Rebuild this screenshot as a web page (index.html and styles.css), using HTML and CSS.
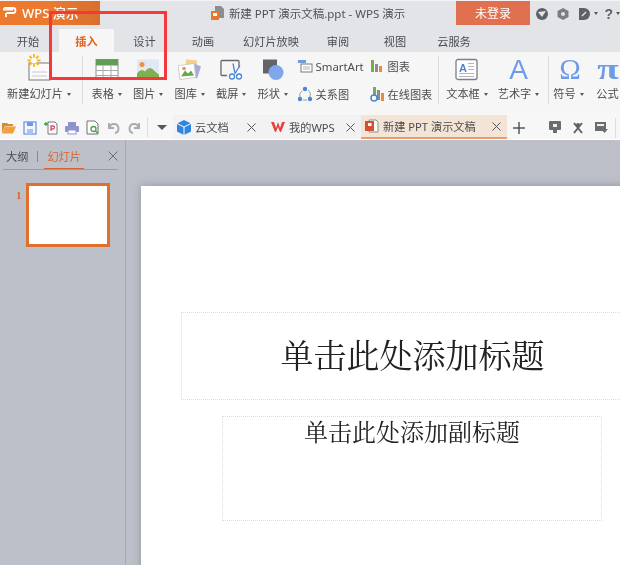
FILE: index.html
```html
<!DOCTYPE html>
<html lang="zh-CN">
<head>
<meta charset="utf-8">
<title>新建 PPT 演示文稿.ppt - WPS 演示</title>
<link rel="stylesheet" href="styles.css">
</head>
<body>
<div class="app">
  <header class="titlebar">
    <div class="appbtn">
      <svg class="applogo" viewBox="0 0 14 10" width="14" height="10"><path d="M1 1h9a2.500 2.500 0 0 1 0 5H3.500M1 1v1.500h9M3 6v4" fill="none" stroke="#fff" stroke-width="1.800"/></svg>
      <span class="appname">WPS 演示</span>
      <i class="appcaret"></i>
    </div>
    <div class="doctitle">
      <svg viewBox="0 0 16 16" width="16" height="16"><path d="M5 1h6l3 3v9H5z" fill="#8a8d94"/><rect x="1" y="6" width="8" height="9" fill="#e8752c"/><rect x="3" y="8" width="4" height="3" fill="#fff"/></svg>
      <span>新建 PPT 演示文稿.ppt - WPS 演示</span>
    </div>
    <button class="login">未登录</button>
    <div class="winicons">
      <svg viewBox="0 0 14 14" width="14" height="14"><circle cx="7" cy="7" r="6" fill="#5f6167"/><path d="M3 5l4 5 4-6z" fill="#e3e4e8"/></svg>
      <svg viewBox="0 0 14 14" width="14" height="14"><path d="M7 1l5.500 3v6L7 13l-5.500-3V4z" fill="#7b7d83"/><circle cx="7" cy="7" r="2" fill="#e3e4e8"/></svg>
      <svg viewBox="0 0 14 14" width="14" height="14"><path d="M2 1h5a6 6 0 0 1 0 12H2z" fill="#5f6167"/><path d="M5 9l4-4" stroke="#e3e4e8" stroke-width="1.500"/></svg>
      <i class="caret"></i>
      <span class="help">?</span>
      <i class="caret"></i>
    </div>
  </header>

  <nav class="tabs">
    <span class="tab">开始</span>
    <span class="tab active">插入</span>
    <span class="tab">设计</span>
    <span class="tab">动画</span>
    <span class="tab">幻灯片放映</span>
    <span class="tab">审阅</span>
    <span class="tab">视图</span>
    <span class="tab">云服务</span>
  </nav>

  <section class="ribbon">
    <div class="item w-new">
      <svg class="newicon" viewBox="0 0 36 28" width="36" height="28"><rect x="5" y="9" width="21" height="17" fill="#fafafa" stroke="#77797e"/><path d="M8 18h15M8 22h15" stroke="#c9cacd"/><g stroke="#f5b81e" stroke-width="1.800"><path d="M10 0v13M3.500 6.500h13M5.500 2l9 9M14.500 2l-9 9"/></g><circle cx="10" cy="6.500" r="3" fill="#fff"/></svg>
      <span class="label">新建幻灯片<i class="caret"></i></span>
    </div>
    <i class="sep"></i>
    <div class="item w-tb">
      <svg viewBox="0 0 24 22" width="24" height="22"><rect x="1" y="1" width="22" height="20" fill="#fff" stroke="#8b8d90"/><rect x="1" y="1" width="22" height="6" fill="#5f9e55"/><path d="M1 12h22M1 17h22M8 7v14M16 7v14" stroke="#a7a9ab"/></svg>
      <span class="label">表格<i class="caret"></i></span>
    </div>
    <div class="item w-tb">
      <svg viewBox="0 0 24 22" width="24" height="22"><rect x="1" y="1" width="22" height="20" fill="#dfe8f3"/><circle cx="6" cy="6" r="2.500" fill="#f0913a"/><path d="M1 21v-6q4-6 8-2 4-6 8-2t6 5v5z" fill="#7fb04c"/></svg>
      <span class="label">图片<i class="caret"></i></span>
    </div>
    <div class="item w-tb">
      <svg viewBox="0 0 24 22" width="24" height="22"><path d="M8 1l11 1-1 13-11-1z" fill="#f2cf8a"/><path d="M16 5l7 3-4 12-6-2z" fill="#a9a7dc"/><rect x="1" y="6" width="16" height="14" fill="#fff" stroke="#c9cacd" transform="rotate(-8 9 13)"/><path d="M3 18l4-6 3 3 3-3 3 5z" fill="#6aa84f"/><circle cx="6" cy="10" r="1.800" fill="#f0913a"/></svg>
      <span class="label">图库<i class="caret"></i></span>
    </div>
    <div class="item w-tb">
      <svg viewBox="0 0 24 22" width="24" height="22"><path d="M8 17H3a1 1 0 0 1-1-1V3a1 1 0 0 1 1-1h16a1 1 0 0 1 1 1v6" fill="none" stroke="#66686c" stroke-width="1.300"/><path d="M14 5l2 10M21 7l-5 8" stroke="#4a86d8" stroke-width="1.300"/><circle cx="13" cy="18" r="2.500" fill="#fff" stroke="#4a86d8" stroke-width="1.300"/><circle cx="20" cy="18" r="2.500" fill="#fff" stroke="#4a86d8" stroke-width="1.300"/></svg>
      <span class="label">截屏<i class="caret"></i></span>
    </div>
    <div class="item w-tb">
      <svg viewBox="0 0 24 22" width="24" height="22"><rect x="2" y="1" width="14" height="14" fill="#626468"/><circle cx="15" cy="14" r="7.500" fill="#7fa7ea"/></svg>
      <span class="label">形状<i class="caret"></i></span>
    </div>
    <div class="col w-smart">
      <span class="small"><svg viewBox="0 0 16 14" width="16" height="14"><path d="M1 1h8v3H1z" fill="#6d9be0"/><rect x="4" y="5" width="11" height="8" fill="#fff" stroke="#77797e"/><path d="M6 8h7M6 10h7" stroke="#b5b6b9"/></svg><span class="latin">SmartArt</span></span>
      <span class="small"><svg viewBox="0 0 16 16" width="16" height="16"><path d="M4 13a5.500 5.500 0 0 1 1-8M11 4a5.500 5.500 0 0 1 1 8M6 14h4" fill="none" stroke="#9a9ca0"/><circle cx="8" cy="3" r="2.200" fill="#4a86d8"/><circle cx="3" cy="13" r="2.200" fill="#4a86d8"/><circle cx="13" cy="13" r="2.200" fill="#4a86d8"/></svg>关系图</span>
    </div>
    <div class="col w-chart">
      <span class="small"><svg viewBox="0 0 14 14" width="14" height="14"><rect x="1" y="1" width="3" height="12" fill="#79ab4f"/><rect x="5" y="5" width="3" height="8" fill="#8b8d90"/><rect x="9" y="7" width="3" height="6" fill="#ea8a3e"/></svg>图表</span>
      <span class="small"><svg viewBox="0 0 14 16" width="14" height="16"><rect x="3" y="1" width="3" height="8" fill="#79ab4f"/><rect x="7" y="4" width="3" height="10" fill="#8b8d90"/><rect x="11" y="7" width="3" height="8" fill="#ea8a3e"/><circle cx="4" cy="12" r="3" fill="#fff" stroke="#4a86d8" stroke-width="1.500"/></svg>在线图表</span>
    </div>
    <i class="sep"></i>
    <div class="item w-tx">
      <svg viewBox="0 0 24 22" width="24" height="22"><rect x="1" y="1" width="21" height="20" rx="2" fill="#fff" stroke="#7d7f83" stroke-width="1.300"/><text x="4" y="13" class="glyph-a">A</text><path d="M13 5h6M13 8h6M13 11h6M4 15h15M4 18h15" stroke="#b5b6b9"/></svg>
      <span class="label">文本框<i class="caret"></i></span>
    </div>
    <div class="item w-art">
      <span class="artglyph">A</span>
      <span class="label">艺术字<i class="caret"></i></span>
    </div>
    <i class="sep"></i>
    <div class="item w-sym">
      <span class="mathglyph">Ω</span>
      <span class="label">符号<i class="caret"></i></span>
    </div>
    <div class="item w-fx">
      <span class="mathglyph pi">π</span>
      <span class="label">公式</span>
    </div>
  </section>

  <section class="quick">
    <div class="qicons">
      <svg viewBox="0 0 14 12" width="14" height="12"><path d="M0 1h5l1 1h5v2H3L0 11z" fill="#d98a2f"/><path d="M3 4.500h11L11 11.500H0z" fill="#f0a040"/></svg>
      <svg viewBox="0 0 14 14" width="14" height="14"><rect x="1" y="1" width="12" height="12" fill="#f2f6fc" stroke="#6f9ae0" stroke-width="1.300"/><rect x="4" y="1" width="6" height="4" fill="#6f9ae0"/><rect x="4" y="8" width="6" height="5" fill="#a7c3ee"/></svg>
      <svg viewBox="0 0 14 14" width="14" height="14"><path d="M4 1h7l2 2v10H4z" fill="#fff" stroke="#77797e"/><path d="M0 3h4M2 1v4" stroke="#3fa34d" stroke-width="1.300"/><path d="M7 10V5h2a1.500 1.500 0 0 1 0 3H7" fill="none" stroke="#d2525a" stroke-width="1.300"/></svg>
      <svg viewBox="0 0 14 14" width="14" height="14"><rect x="3" y="1" width="8" height="4" fill="#8f93cc"/><rect x="0" y="5" width="14" height="6" rx="1" fill="#8f93cc"/><rect x="3" y="9" width="8" height="4" fill="#fff" stroke="#8f93cc"/></svg>
      <svg viewBox="0 0 14 15" width="14" height="15"><path d="M1 1h8l3 3v10H1z" fill="#fff" stroke="#6f7175"/><circle cx="7.500" cy="9" r="2.500" fill="none" stroke="#4c9e55" stroke-width="1.300"/><path d="M9.500 11l2.500 2.500" stroke="#4c9e55" stroke-width="1.500"/></svg>
      <svg class="gray" viewBox="0 0 12 12" width="12" height="12"><path d="M1 1v5h5M1.500 6A4.500 4.500 0 1 1 7 11" fill="none" stroke="#a9abae" stroke-width="2"/></svg>
      <svg class="gray" viewBox="0 0 12 12" width="12" height="12"><path d="M11 1v5H6M10.500 6A4.500 4.500 0 1 0 5 11" fill="none" stroke="#a9abae" stroke-width="2"/></svg>
    </div>
    <i class="qsep"></i>
    <i class="qdrop"></i>
    <div class="doctab w-cloud">
      <svg viewBox="0 0 14 15" width="14" height="15"><path d="M7 0l7 3.500v8L7 15 0 11.500v-8z" fill="#2f86e0"/><path d="M0 3.500L7 7l7-3.500M7 7v8" stroke="#fff" fill="none"/></svg>
      <span class="doclabel">云文档</span>
      <svg class="x" viewBox="0 0 9 9" width="9" height="9"><path d="M.5.5l8 8M8.500.5l-8 8" stroke="#55575b"/></svg>
    </div>
    <div class="doctab w-mine">
      <svg viewBox="0 0 14 12" width="14" height="12"><path d="M0 1h3l2 6 2-6 2 6 2-6h3l-4 10H9L7 6l-2 5H4z" fill="#e5403a"/></svg>
      <span class="doclabel">我的WPS</span>
      <svg class="x" viewBox="0 0 9 9" width="9" height="9"><path d="M.5.5l8 8M8.500.5l-8 8" stroke="#55575b"/></svg>
    </div>
    <div class="doctab current w-doc">
      <svg viewBox="0 0 14 14" width="14" height="14"><path d="M4 1h7l2 2v10H4z" fill="#fff" stroke="#8b8d90"/><rect x="0" y="2" width="9" height="10" fill="#d4502e"/><rect x="3" y="4" width="3.500" height="3" fill="#fff"/></svg>
      <span class="doclabel">新建 PPT 演示文稿</span>
      <svg class="x" viewBox="0 0 9 9" width="9" height="9"><path d="M.5.5l8 8M8.500.5l-8 8" stroke="#55575b"/></svg>
    </div>
    <svg class="plus" viewBox="0 0 12 12" width="12" height="12"><path d="M6 0v12M0 6h12" stroke="#55575b" stroke-width="1.500"/></svg>
    <div class="qright">
      <svg viewBox="0 0 12 13" width="12" height="13"><rect x="0" y="0" width="12" height="9" rx="1" fill="#6a6c70"/><rect x="4" y="9" width="4" height="3" fill="#6a6c70"/><rect x="4" y="3" width="4" height="3" fill="#efefef"/></svg>
      <svg viewBox="0 0 12 12" width="12" height="12"><path d="M2 1l8 10M10 1L2 11" stroke="#5f6167" stroke-width="2"/><circle cx="6" cy="3" r="2" fill="#5f6167"/></svg>
      <svg viewBox="0 0 13 12" width="13" height="12"><rect x="0" y="0" width="11" height="9" fill="#6a6c70"/><rect x="2" y="2" width="7" height="2" fill="#efefef"/><path d="M6 7h7l-3.500 4z" fill="#6a6c70"/></svg>
      <i class="qsep tail"></i>
    </div>
  </section>

  <main class="work">
    <aside class="panel">
      <div class="panelhead">
        <span class="ptab">大纲</span>
        <i class="pbar"></i>
        <span class="ptab on">幻灯片</span>
        <svg class="pclose" viewBox="0 0 10 10" width="10" height="10"><path d="M.5.5l9 9M9.500.5l-9 9" stroke="#6a6c73"/></svg>
      </div>
      <div class="thumbrow">
        <span class="num">1</span>
        <div class="thumb"></div>
      </div>
    </aside>
    <div class="stage">
      <div class="slide">
        <div class="ph title">单击此处添加标题</div>
        <div class="ph sub">单击此处添加副标题</div>
      </div>
    </div>
  </main>

  <div class="annot"></div>
</div>
</body>
</html>
```

FILE: styles.css
```css
* { box-sizing: border-box; }
html, body { margin: 0; height: 100%; overflow: hidden; }
body { font-family: "Noto Sans CJK SC", "Liberation Sans", sans-serif; color: #4a4c50; font-size: 11.2px; }
svg { display: block; flex: none; }
i { display: block; font-style: normal; }
.app { position: relative; width: 620px; height: 565px; display: flex; flex-direction: column; overflow: hidden; background: #bdc0c9; filter: blur(.4px); }

.titlebar { height: 26px; flex: none; background: #e3e4e8; border-top: 1px solid #f4f4f6; display: flex; align-items: center; }
.appbtn { width: 100px; height: 24px; background: linear-gradient(90deg, #ec7a2e 50%, #d8702e); color: #fff; display: flex; align-items: center; gap: 5px; padding-left: 3px; padding-bottom: 2px; margin-bottom: 1px; }
.appname { font-family: "Noto Sans", "Noto Sans CJK SC", sans-serif; font-size: 13px; font-weight: 500; white-space: nowrap; }
.appcaret { width: 0; height: 0; border: 2px solid transparent; border-top: 2px solid #f6d8c4; border-bottom: 0; margin-left: 11px; }
.doctitle { margin-left: 110px; width: 246px; display: flex; align-items: center; gap: 3px; font-family: "Noto Sans", "Noto Sans CJK SC", sans-serif; font-size: 11.5px; color: #4f5155; white-space: nowrap; padding-bottom: 2px; }
.login { width: 75px; height: 24px; margin-bottom: 1px; border: 0; padding: 0 0 2px; background: #e0704f; color: #fff; font: inherit; font-size: 12px; }
.winicons { display: flex; align-items: center; margin-left: 5px; gap: 7px; color: #5f6167; }
.winicons .help { font-size: 14px; line-height: 1; margin-left: -1px; font-family: "Liberation Sans", sans-serif; font-weight: 700; }
.caret { display: inline-block; width: 0; height: 0; border: 2.5px solid transparent; border-top: 3px solid #55575b; border-bottom: 0; margin-left: 4px; vertical-align: middle; }
.winicons .caret { margin-left: -4px; }

.tabs { height: 26px; flex: none; background: #e3e4e8; display: flex; align-items: flex-end; }
.tab { height: 23px; line-height: 24px; font-size: 11.2px; text-align: center; flex: none; }
.tab:nth-child(1) { width: 59px; padding-right: 3px; }
.tab:nth-child(2) { width: 55px; }
.tab:nth-child(3) { width: 61px; }
.tab:nth-child(4) { width: 56px; }
.tab:nth-child(5) { width: 78px; margin-left: 1px; }
.tab:nth-child(6) { width: 56px; }
.tab:nth-child(7) { width: 58px; }
.tab:nth-child(8) { width: 60px; }
.tab.active { background: #f6f6f6; color: #e0651f; font-weight: 700; }

.ribbon { height: 61px; flex: none; background: #f6f6f6; display: flex; align-items: stretch; padding-top: 2px; }
.item { display: flex; flex-direction: column; align-items: center; flex: none; padding-top: 3px; }
.item > svg, .item > .artglyph, .item > .mathglyph { height: 25px; margin-bottom: 1px; }
.item > .newicon { margin-left: 6px; height: 28px; margin-top: -3px; }
.label { white-space: nowrap; line-height: 14px; margin-top: 3px; }
.sep { width: 1px; height: 48px; background: #dcdcde; flex: none; margin-top: 2px; }
.w-new { width: 78px; margin-right: 4px; }
.w-tb { width: 41.5px; }
.ribbon > .sep:nth-child(2) { margin-right: 3px; }
.col { display: flex; flex-direction: column; flex: none; padding-top: 2px; gap: 8px; }
.w-smart { width: 72px; margin-left: 3px; }
.w-chart { width: 69px; padding-left: 1px; }
.small { display: flex; align-items: center; gap: 3px; height: 20px; white-space: nowrap; }
.w-chart .small { gap: 4px; }
.latin { font-family: "Noto Sans", sans-serif; font-size: 11.4px; }
.glyph-a { font: 700 11px "Liberation Sans", sans-serif; fill: #4a86d8; }
.w-tx { width: 53px; margin-left: 2px; }
.w-art { width: 50px; margin-right: 4px; }
.w-sym { width: 36px; margin-left: 2px; }
.w-fx { width: 42px; }
.artglyph { font: 400 28px/25px "Liberation Sans", sans-serif; color: #6d9be8; }
.mathglyph { font: 400 29px/25px "Liberation Serif", serif; color: #6d9be8; margin-left: 3px; }
.mathglyph.pi { font-weight: 700; transform: scaleX(1.35); margin-left: 0; }

.quick { height: 27px; flex: none; background: #f7f7f7; display: flex; align-items: stretch; padding-top: 2px; border-bottom: 1px solid #fff; }
.qicons { width: 147px; display: flex; align-items: center; padding: 1px 0 0 2px; gap: 7px; flex: none; }
.qicons .gray { margin-left: 1px; }
.qsep { width: 1px; height: 20px; background: #dcdcde; align-self: center; flex: none; }
.qdrop { width: 0; height: 0; border: 5px solid transparent; border-top: 5px solid #55575b; border-bottom: 0; align-self: center; margin-left: 9px; margin-right: 6px; flex: none; }
.doctab { height: 24px; display: flex; align-items: center; background: #f2f2f2; padding-left: 4px; flex: none; gap: 4px; }
.doclabel { white-space: nowrap; flex: 1; font-family: "Noto Sans", "Noto Sans CJK SC", sans-serif; }
.w-cloud { width: 89px; }
.w-mine { width: 99px; padding-left: 9px; }
.w-doc { width: 146px; }
.doctab.current { background: #f4e4d5; border-bottom: 2px solid #ee9a6d; }
.doctab .x { margin-right: 6px; }
.plus { align-self: center; margin: 1px 0 0 6px; }
.qright { display: flex; align-items: center; gap: 11px; margin-left: 24px; padding-top: 1px; }
.qsep.tail { margin-left: -4px; }

.work { flex: 1; min-height: 0; display: flex; background: #bdc0c9; }
.panel { width: 126px; flex: none; border-right: 1px solid #a6a9b2; padding: 0 7px 0 3px; }
.panelhead { height: 30px; display: flex; align-items: center; border-bottom: 1px solid #9a9ca5; font-size: 11.2px; padding: 3px 0 0 3px; }
.ptab.on { color: #d9652a; position: relative; }
.ptab.on::after { content: ""; position: absolute; left: -3px; right: -3px; bottom: -5px; height: 1px; background: #d9652a; }
.pbar { width: 1px; height: 11px; background: #85878f; margin: 0 9px; }
.pclose { margin-left: auto; margin-right: 0; }
.thumbrow { display: flex; margin-top: 13px; padding-left: 13px; gap: 6px; }
.num { font: 700 11px/1 "Liberation Serif", serif; color: #d9652a; padding-top: 7px; width: 4px; }
.thumb { width: 84px; height: 64px; background: #fff; border: 3px solid #e0702e; }

.stage { flex: 1; min-width: 0; padding: 46px 0 0 15px; overflow: hidden; }
.slide { width: 560px; height: 460px; background: #fff; box-shadow: 0 0 8px rgba(90, 93, 105, .45); padding-top: 126px; }
.ph { border: 1px dotted #dcdcdc; color: #222; text-align: center; font-family: "Noto Serif CJK SC", "Noto Sans CJK SC", serif; font-weight: 400; }
.title { margin-left: 40px; width: 463px; height: 88px; font-size: 33px; line-height: 82px; }
.sub { margin-left: 81px; margin-top: 16px; width: 380px; height: 105px; font-size: 24px; line-height: 28px; }

.annot { position: absolute; left: 49px; top: 11px; width: 118px; height: 69px; border: 3px solid #f6373c; pointer-events: none; }
```
